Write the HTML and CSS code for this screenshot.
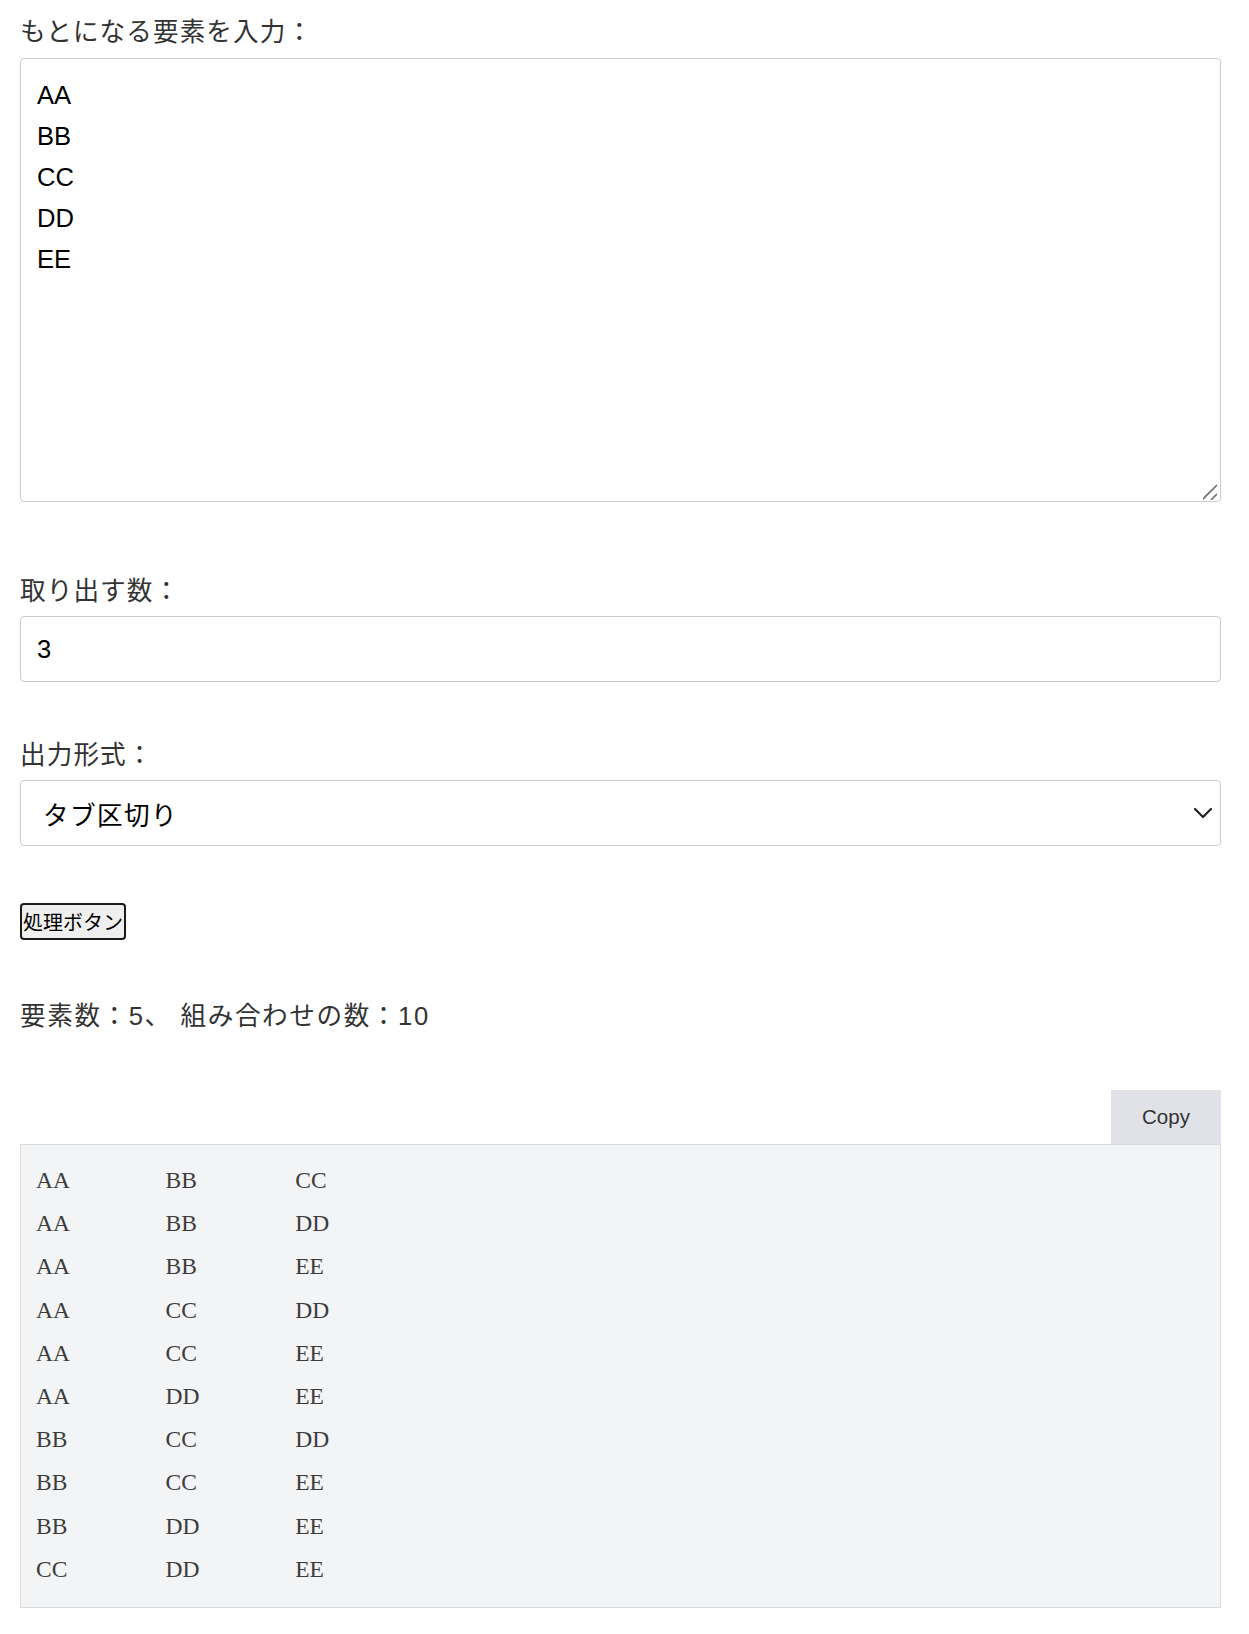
FILE: index.html
```html
<!DOCTYPE html>
<html lang="ja">
<head>
<meta charset="utf-8">
<title>組み合わせ</title>
<link rel="stylesheet" href="styles.css">
</head>
<body>
<main class="page">
  <label class="field-label first-label" for="items">もとになる要素を入力：</label>
  <div class="textarea-wrap">
    <textarea id="items" class="items-input">AA
BB
CC
DD
EE</textarea>
    <svg class="grip" width="16" height="16" viewBox="0 0 16 16" aria-hidden="true">
      <path d="M-1 16 L14 1 M8 16 L14 10" fill="none" stroke="#6b6b6b" stroke-width="1.6"/>
    </svg>
  </div>

  <label class="field-label label-gap" for="count">取り出す数：</label>
  <input id="count" class="text-input" type="text" value="3">

  <label class="field-label label-gap-sm" for="format">出力形式：</label>
  <div class="select-wrap">
    <select id="format" class="select-input">
      <option>タブ区切り</option>
      <option>カンマ区切り</option>
    </select>
    <svg class="chevron" width="20" height="12" viewBox="0 0 20 12" aria-hidden="true">
      <path d="M2 2 L10 10 L18 2" fill="none" stroke="#222" stroke-width="2.2" stroke-linecap="round" stroke-linejoin="round"/>
    </svg>
  </div>

  <button class="run-button" type="button">処理ボタン</button>

  <p class="summary">要素数：5、 組み合わせの数：10</p>

  <div class="result">
    <div class="result-bar"><button class="copy-button" type="button">Copy</button></div>
<pre class="output">AA	BB	CC
AA	BB	DD
AA	BB	EE
AA	CC	DD
AA	CC	EE
AA	DD	EE
BB	CC	DD
BB	CC	EE
BB	DD	EE
CC	DD	EE</pre>
  </div>
</main>
</body>
</html>
```

FILE: styles.css
```css
html, body {
  margin: 0;
  padding: 0;
  background: #ffffff;
}

.page {
  width: 1201px;
  padding: 9px 0 0 20px;
  font-family: "Noto Sans CJK JP", "Liberation Sans", sans-serif;
  color: #333333;
}

.field-label {
  display: block;
  font-size: 25.6px;
  line-height: 41px;
  letter-spacing: 1.1px;
  margin-bottom: 7px;
}

.first-label {
  margin-bottom: 8px;
}

.label-gap {
  margin-top: 66px;
}

.label-gap-sm {
  margin-top: 50px;
}

.textarea-wrap {
  position: relative;
  width: 1201px;
}

.items-input {
  display: block;
  box-sizing: border-box;
  width: 1201px;
  height: 444px;
  margin: 0;
  padding: 16px;
  border: 1px solid #cccccc;
  border-radius: 4px;
  font-family: "Liberation Sans", Arial, sans-serif;
  font-size: 25.6px;
  line-height: 40.96px;
  color: #000000;
  resize: none;
  background: #ffffff;
}

.grip {
  position: absolute;
  right: 2px;
  bottom: 2px;
  pointer-events: none;
}

.text-input {
  display: block;
  box-sizing: border-box;
  width: 1201px;
  height: 66px;
  margin: 0;
  padding: 0 16px;
  border: 1px solid #cccccc;
  border-radius: 4px;
  font-family: "Liberation Sans", Arial, sans-serif;
  font-size: 25.6px;
  color: #000000;
  background: #ffffff;
}

.select-wrap {
  position: relative;
  width: 1201px;
}

.select-input {
  display: block;
  box-sizing: border-box;
  width: 1201px;
  height: 66px;
  margin: 0;
  padding: 0 50px 0 22px;
  border: 1px solid #cccccc;
  border-radius: 4px;
  font-family: "Noto Sans CJK JP", "Liberation Sans", sans-serif;
  font-size: 25.6px;
  letter-spacing: 1.4px;
  color: #000000;
  background: #ffffff;
  appearance: none;
  -webkit-appearance: none;
}

.chevron {
  position: absolute;
  right: 8px;
  top: 27px;
  pointer-events: none;
}

.run-button {
  display: block;
  box-sizing: border-box;
  margin: 57px 0 0 0;
  height: 37px;
  padding: 0 1px;
  border: 2px solid #1a1a1a;
  border-radius: 4px;
  background: #efefef;
  font-family: "Noto Sans CJK JP", sans-serif;
  font-size: 20px;
  line-height: 31px;
  color: #000000;
}

.summary {
  margin: 56px 0 0 0;
  font-family: "Liberation Sans", "Noto Sans CJK JP", sans-serif;
  font-size: 25.6px;
  line-height: 41px;
  letter-spacing: 1.6px;
}

.summary-num {
  font-size: 27px;
}

.result {
  margin-top: 53px;
  width: 1201px;
}

.result-bar {
  display: flex;
  justify-content: flex-end;
}

.copy-button {
  box-sizing: border-box;
  width: 110px;
  height: 54px;
  margin: 0;
  padding: 0;
  border: none;
  background: #e1e2e7;
  font-family: "Liberation Sans", Arial, sans-serif;
  font-size: 20.5px;
  color: #333333;
}

.output {
  box-sizing: border-box;
  margin: 0;
  width: 1201px;
  padding: 14px 15px 16px 15px;
  border: 1px solid #dcdcdc;
  background: #f3f4f6;
  font-family: "Liberation Serif", "Times New Roman", serif;
  font-size: 23.5px;
  line-height: 43.2px;
  color: #3c3c3c;
  tab-size: 129.6px;
}
```
